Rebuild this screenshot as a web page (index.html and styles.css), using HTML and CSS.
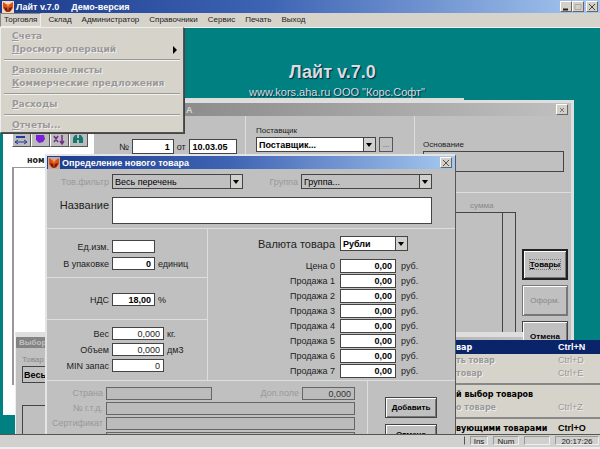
FILE: index.html
```html
<!DOCTYPE html>
<html lang="ru">
<head>
<meta charset="utf-8">
<title>Лайт v.7.0</title>
<link rel="stylesheet" href="styles.css">
</head>
<body>
<div class="app">
  <header class="titlebar app-title">
    <svg class="fox" viewBox="0 0 12 12" aria-hidden="true"><rect width="12" height="12" fill="#f3d9c4"/><path d="M1 1l3 2h4l3-2v6l-3 4H4L1 7z" fill="#d9501a"/><path d="M2 6l3 1 1 4-3-2zM10 6L7 7l-1 4 3-2z" fill="#6a1c10"/><path d="M4 3l2 3 2-3z" fill="#f59a3c"/></svg>
    <span class="app-name">Лайт v.7.0</span><span class="app-mode">Демо-версия</span>
    <span class="win-controls">
      <button class="ctl" type="button" aria-label="Свернуть"><svg viewBox="0 0 10 8"><path d="M2 6.5h5" stroke="#222" stroke-width="2"/></svg></button>
      <button class="ctl" type="button" aria-label="Развернуть"><svg viewBox="0 0 10 8"><path d="M2 1.5h6v5H2z" fill="none" stroke="#aaa"/></svg></button>
      <button class="ctl last" type="button" aria-label="Закрыть"><svg viewBox="0 0 10 8"><path d="M2 1l6 6M8 1L2 7" stroke="#444"/></svg></button>
    </span>
  </header>
  <nav class="menubar">
    <button type="button" class="open">Торговля</button><button type="button">Склад</button><button type="button">Администратор</button><button type="button">Справочники</button><button type="button">Сервис</button><button type="button">Печать</button><button type="button">Выход</button>
  </nav>

  <main class="desktop">
    <div class="brand"><h1>Лайт v.7.0</h1><p>www.kors.aha.ru ООО "Корс.Софт"</p></div>

    <section class="window journal">
      <div class="tools">
        <button type="button" aria-label="Период"><svg viewBox="0 0 16 12"><path d="M2 8h12M2 8l3-2M2 8l3 2M14 8l-3-2M14 8l-3 2" stroke="#223a9a" fill="none"/><path d="M3 3h9" stroke="#223a9a" stroke-width="2"/></svg></button>
        <button type="button" aria-label="Отбор"><svg viewBox="0 0 16 12"><path d="M4 1h8l1 4-2 3-4 1-3-3z" fill="#7a20d8"/></svg></button>
        <button type="button" aria-label="Сортировка"><svg viewBox="0 0 16 12"><path d="M3 2l4 6M7 2L3 8M11 1v8M9 7l2 3 2-3" stroke="#70308a" stroke-width="1.5" fill="none"/></svg></button>
        <button type="button" aria-label="Поиск"><svg viewBox="0 0 16 12"><path d="M3 9V4l2-3h2v3h2V1h2l2 3v5h-4V6H7v3z" fill="#127a70"/></svg></button>
      </div>
      <div class="journal-head">ном</div>
      <div class="journal-list"></div>
    </section>

    <section class="window order">
      <header class="titlebar inactive"><span>А</span><button class="ctl" type="button" aria-label="Закрыть"><svg viewBox="0 0 10 8"><path d="M3 2l4 4M7 2L3 6" stroke="#777"/></svg></button></header>
      <div class="order-head">
        <div class="order-num"><label for="num">№</label><input id="num" class="bold num" value="1"><label for="date">от</label><input id="date" class="bold" value="10.03.05"></div>
        <div class="order-sup"><label for="sup">Поставщик</label><div class="row"><span class="combo"><select id="sup"><option>Поставщик...</option></select></span><button class="dots" type="button">...</button></div></div>
        <div class="order-base"><label for="base">Основание</label><input id="base"></div>
      </div>
      <div class="order-body">
        <div class="order-table"><div class="sum">сумма</div><div class="grid-box"></div></div>
        <div class="order-actions">
          <button class="btn default" type="button"><span><u>Т</u>овары</span></button>
          <button class="btn" type="button" disabled>Оформ.</button>
          <button class="btn" type="button">Отмена</button>
        </div>
      </div>
    </section>

    <section class="window picker">
      <header class="titlebar inactive">Выбор</header>
      <div class="picker-body"><label for="pick">Товар</label><input id="pick" class="bold" value="Весь"><div class="picker-list"></div></div>
    </section>

    <div class="menu context" role="menu">
      <button type="button" class="hot"><span>вар</span><kbd>Ctrl+N</kbd></button>
      <button type="button" disabled><span>ть товар</span><kbd>Ctrl+D</kbd></button>
      <button type="button" disabled><span>товар</span><kbd>Ctrl+E</kbd></button>
      <hr>
      <button type="button"><span>й выбор товаров</span></button>
      <button type="button" disabled><span>о товаре</span><kbd>Ctrl+Z</kbd></button>
      <hr>
      <button type="button"><span>вующими товарами</span><kbd>Ctrl+O</kbd></button>
    </div>

    <section class="window product">
      <header class="titlebar">
        <svg class="fox" viewBox="0 0 12 12" aria-hidden="true"><rect width="12" height="12" fill="#c8a8a0"/><path d="M1 1l3 2h4l3-2v6l-3 4H4L1 7z" fill="#d9501a"/><path d="M2 6l3 1 1 4-3-2zM10 6L7 7l-1 4 3-2z" fill="#6a1c10"/><path d="M4 3l2 3 2-3z" fill="#f59a3c"/></svg>
        <span>Определение нового товара</span><button class="ctl" type="button" aria-label="Закрыть"><svg viewBox="0 0 10 8"><path d="M2 1l6 6M8 1L2 7" stroke="#555"/></svg></button>
      </header>
      <div class="top">
        <label class="dim" for="flt">Тов.фильтр</label><span class="combo flat"><select id="flt"><option>Весь перечень</option></select></span>
        <label class="dim" for="grp">Группа</label><span class="combo flat"><select id="grp"><option>Группа...</option></select></span>
        <label class="big" for="name">Название</label><textarea id="name"></textarea>
      </div>
      <div class="mid">
        <div class="left">
          <div class="block unit">
            <label for="u">Ед.изм.</label><input id="u" class="short"><span></span>
            <label for="pk">В упаковке</label><input id="pk" class="short bold num" value="0"><span>единиц</span>
          </div>
          <div class="block vat"><label for="v">НДС</label><input id="v" class="short bold num" value="18,00"><span>%</span></div>
          <div class="block size">
            <label for="w">Вес</label><input id="w" class="num" value="0,000"><span>кг.</span>
            <label for="vol">Объем</label><input id="vol" class="num" value="0,000"><span>дм3</span>
            <label for="min">MIN запас</label><input id="min" class="num" value="0"><span></span>
          </div>
        </div>
        <div class="right">
          <div class="currency"><label class="big" for="cur">Валюта товара</label><span class="combo"><select id="cur"><option>Рубли</option></select></span></div>
          <div class="prices">
            <label for="p0">Цена 0</label><input id="p0" class="bold num" value="0,00"><span>руб.</span>
            <label for="p1">Продажа 1</label><input id="p1" class="bold num" value="0,00"><span>руб.</span>
            <label for="p2">Продажа 2</label><input id="p2" class="bold num" value="0,00"><span>руб.</span>
            <label for="p3">Продажа 3</label><input id="p3" class="bold num" value="0,00"><span>руб.</span>
            <label for="p4">Продажа 4</label><input id="p4" class="bold num" value="0,00"><span>руб.</span>
            <label for="p5">Продажа 5</label><input id="p5" class="bold num" value="0,00"><span>руб.</span>
            <label for="p6">Продажа 6</label><input id="p6" class="bold num" value="0,00"><span>руб.</span>
            <label for="p7">Продажа 7</label><input id="p7" class="bold num" value="0,00"><span>руб.</span>
          </div>
        </div>
      </div>
      <div class="foot">
        <div class="extra">
          <label for="c">Страна</label><input id="c" class="gray"><label for="x">Доп.поле</label><input id="x" class="gray num" value="0,000">
          <label for="g">№ г.т.д.</label><input id="g" class="gray wide">
          <label for="s">Сертификат</label><input id="s" class="gray wide">
          <label for="o">Описание</label><input id="o" class="gray wide">
        </div>
        <div class="foot-actions">
          <button class="btn" type="button"><u>Д</u>обавить</button>
          <button class="btn" type="button">Отмена</button>
        </div>
      </div>
    </section>
  </main>

  <div class="menu dropdown" role="menu">
    <button type="button" disabled><span><u>С</u>чета</span></button>
    <button type="button" disabled><span><u>П</u>росмотр операций</span><svg class="arrow" viewBox="0 0 4 8"><path d="M0 0l4 4-4 4z" fill="#000"/></svg></button>
    <hr>
    <button type="button" disabled><span><u>Р</u>азвозные листы</span></button>
    <button type="button" disabled><span><u>К</u>оммерческие предложения</span></button>
    <hr>
    <button type="button" disabled><span><u>Р</u>асходы</span></button>
    <hr>
    <button type="button" disabled><span><u>О</u>тчеты...</span></button>
  </div>

  <footer class="status">
    <span class="msg"></span><span class="ins">Ins</span><span class="nm">Num</span><span class="nm"></span><span class="time">20:17:26</span>
  </footer>
</div>
</body>
</html>
```

FILE: styles.css
```css
* { box-sizing: border-box; }
body { margin: 0; font: 9px/12px "Liberation Sans", Arial, sans-serif; color: #222; }
button, input, select, textarea { font: inherit; color: inherit; margin: 0; padding: 0; border-radius: 0; }
label, span { white-space: nowrap; }
hr { margin: 3px 4px; border: 0; border-top: 1px solid #999; border-bottom: 1px solid #f2f2ee; }
u { text-underline-offset: 1px; }

.app { position: relative; height: 100vh; display: flex; flex-direction: column; overflow: hidden; background: #d6d3cb; }

.titlebar { display: flex; align-items: center; height: 13px; gap: 2px; color: #fff; font-weight: bold; font-size: 9px; background: linear-gradient(90deg, #1c3c8c, #3f64b4 45%, #a6c8f0); }
.titlebar.inactive { background: linear-gradient(90deg, #828282, #969696 35%, #c0c0c0); color: #d8d8d8; }
.app-title { flex: none; padding: 0 2px; }
.app-mode { margin-left: 10px; }
.fox { width: 12px; height: 12px; flex: none; }
.win-controls { display: flex; margin-left: auto; }
.ctl { display: flex; align-items: center; justify-content: center; width: 12px; height: 11px; margin-left: auto; border: 1px solid; border-color: #fff #666 #666 #fff; background: #d4d0c8; }
.ctl svg { width: 10px; height: 8px; flex: none; }
.ctl.last { margin-left: 2px; }

.menubar { flex: none; display: flex; height: 15px; font-size: 8px; border-bottom: 1px solid #eee; background: #d6d3cb; }
.menubar button { border: 1px solid transparent; background: none; padding: 0 4px; }
.menubar .open { padding: 0 3px; margin-right: 2px; border-color: #888 #eee #eee #888; }

.desktop { position: relative; flex: 1; min-height: 0; overflow: hidden; background: #008080; }
.brand { position: absolute; top: 34px; left: 249px; color: #d6dddd; text-shadow: 1px 1px 1px #024; white-space: nowrap; }
.brand h1 { margin: 0 0 0 40px; font-size: 18px; line-height: 20px; font-weight: bold; }
.brand p { margin: 4px 0 0; font-size: 11px; line-height: 12px; }

.window { position: absolute; background: #c0c0c0; }
.window .titlebar { padding: 0 3px; }

.journal { left: 3px; top: 70px; width: 461px; height: 317px; padding: 30px 9px 0; background: #fff; border-top: 5px solid #dcdcd8; }
.tools { display: flex; }
.tools button { width: 19px; height: 14px; border: 1px solid; border-color: #fff #555 #555 #fff; background: #bcbcbc; }
.tools svg { display: block; width: 16px; height: 12px; }
.journal-head { margin: 8px 0 0 15px; font: bold 8px/12px "DejaVu Sans", sans-serif; }
.journal-list { height: 218px; border: solid #999; border-width: 1px 0 0 2px; }

.order { left: 94px; top: 72px; width: 480px; height: 340px; border: solid #dedede; border-width: 3px 3px 0 0; }
.order > .titlebar { justify-content: space-between; padding-left: 92px; }
.order-head { display: flex; height: 77px; border-bottom: 1px solid #ddd; }
.order-num { display: flex; gap: 3px; width: 152px; padding: 23px 0 0 25px; border-right: 1px solid #ddd; align-items: flex-start; }
.order-num label { padding-top: 2px; }
.order-num input { width: 42px; height: 15px; }
.order-num #date { width: 48px; }
.order-sup { width: 169px; padding: 9px 0 0 10px; border-right: 1px solid #ddd; font-size: 8px; }
.order-sup label, .order-base label { display: block; font-size: 8px; }
.row { display: flex; gap: 3px; }
.row .combo { width: 120px; }
.dots { width: 14px; height: 15px; border: 1px solid #555; background: #c0c0c0; color: #555; }
.order-base { flex: 1; padding: 23px 7px 0 8px; }
.order-base input { width: 100%; height: 21px; background: #c0c0c0; }
.order-body { display: flex; height: 244px; }
.order-table { width: 422px; display: flex; flex-direction: column; align-items: flex-end; }
.sum { width: 46px; padding-top: 7px; font-size: 8px; color: #888; }
.grid-box { flex: 1; width: 100%; border: 1px solid #444; background: linear-gradient(90deg, #444 1px, transparent 1px) right 0 top 0 / 13px 100% no-repeat; }
.order-actions { display: flex; flex-direction: column; gap: 5px; padding: 56px 0 0 6px; }

.btn { width: 46px; height: 31px; border: 1px solid #444; box-shadow: inset 1px 1px #fff, inset -1px -1px #777; background: #c0c0c0; font-weight: bold; font-size: 8px; color: #000; }
.btn.default { border: 2px solid #222; }
.btn.default span { border: 1px dotted #777; }
.btn:disabled { color: #888; font-weight: normal; border-color: #777; }

.picker { left: 15px; top: 304px; width: 508px; height: 120px; border-top: 5px solid #dedede; border-left: 1px solid #eee; }
.picker .titlebar { height: 11px; font-size: 8px; color: #c0c0c0; }
.picker-body { padding: 6px; font-size: 8px; color: #888; display: flex; flex-direction: column; }
.picker-body input { width: 80px; height: 17px; color: #000; background: #c0c0c0; font-size: 9px; padding: 0 1px; }
.picker-list { margin-top: 22px; height: 60px; border: 1px solid #444; }

.menu { position: absolute; background: #d6d3cb; font: bold 9px/13px "DejaVu Sans", sans-serif; }
.menu button { display: flex; align-items: center; width: 100%; height: 13px; border: 0; background: none; color: #000; text-align: left; }
.menu button:disabled { color: #999; text-shadow: 1px 1px #eee; }
.menu kbd { margin-left: auto; width: 42px; font: bold 9px/13px "Liberation Sans", sans-serif; }
.menu button:disabled kbd { font-weight: normal; }
.dropdown { left: 0; top: 27px; width: 184px; padding: 2px 3px 0; border: 1px solid; border-color: #eee #555 #555 #eee; box-shadow: 1px 1px #444; font-size: 9px; }
.dropdown button { padding: 0 3px 0 8px; font-size: 9px; }
.dropdown hr { margin: 3px 0; }
.arrow { width: 4px; height: 8px; margin-left: auto; }
.context { left: 456px; right: 0; top: 312px; padding-bottom: 1px; font: bold 8px/13px "DejaVu Sans", sans-serif; }
.context hr { margin: 3px 0; border-color: #888; }
.context .hot { height: 14px; background: #0a246a; color: #fff; }

.product { left: 45px; top: 126px; width: 411px; bottom: 0; overflow: hidden; border: solid; border-width: 2px 1px 0 2px; border-color: #e4e4e4 #555 #555 #e4e4e4; }
.product > .titlebar { padding: 0 3px 0 1px; }
input, textarea, select { border: 1px solid #444; background: #fff; outline: 0; }
input { padding: 0 3px; min-width: 0; }
textarea { resize: none; }
.bold { font-weight: bold; color: #000; }
.num { text-align: right; }
.big { font-size: 11px; }
.dim { color: #999; }
.combo { position: relative; display: block; height: 15px; }
.combo select { appearance: none; display: block; width: 100%; height: 15px; padding: 0 2px; font-size: 9px; font-weight: bold; color: #000; }
.combo.flat select { background: #c0c0c0; font-weight: normal; }
.combo::before { content: ""; position: absolute; top: 1px; right: 1px; bottom: 1px; width: 11px; border-left: 1px solid #444; background: #d0d0cc; }
.combo::after { content: ""; position: absolute; top: 6px; right: 4px; border: 3px solid transparent; border-top: 4px solid #000; border-bottom: 0; }

.top { display: grid; grid-template-columns: 62px 131px 52px 131px; column-gap: 3px; row-gap: 8px; padding: 5px 0 4px; border-bottom: 1px solid #ddd; }
.top label { text-align: right; padding-top: 2px; }
.top textarea { grid-column: 2 / 5; height: 27px; }
.mid { display: flex; border-bottom: 1px solid #ddd; height: 152px; }
.left { width: 161px; border-right: 1px solid #ddd; }
.block { display: grid; grid-template-columns: 62px 52px 1fr; column-gap: 3px; row-gap: 3px; border-bottom: 1px solid #ddd; grid-auto-rows: 13px; align-items: center; }
.block:last-child { border-bottom: 0; }
.block label { text-align: right; }
.block input { height: 13px; width: 52px; }
.block .short { width: 43px; }
.unit { padding: 11px 0 7px; row-gap: 4px; }
.unit span, .vat span { margin-left: -9px; }
.vat { padding: 15px 0 13px; }
.size { padding: 7px 0; }
.right { flex: 1; padding-top: 7px; }
.currency { display: flex; gap: 5px; }
.currency label { width: 127px; text-align: right; padding-top: 2px; }
.currency .combo { width: 68px; }
.prices { display: grid; grid-template-columns: 127px 56px auto; column-gap: 5px; row-gap: 2px; grid-auto-rows: 13px; align-items: center; padding-top: 8px; }
.prices label { text-align: right; }
.prices input { height: 14px; }
.foot { display: flex; }
.extra { display: grid; grid-template-columns: 56px 106px 84px 53px; column-gap: 3px; row-gap: 2px; grid-auto-rows: 13px; width: 321px; padding-top: 6px; border-right: 1px solid #ddd; color: #999; }
.extra label { text-align: right; }
.extra input { height: 13px; color: #333; background: #bcbcbc; border-color: #666; }
.extra .wide { grid-column: 2 / 5; }
.foot-actions { display: flex; flex-direction: column; gap: 6px; padding: 16px 0 0 17px; }
.foot-actions .btn { width: 52px; height: 21px; }

.status { flex: none; display: flex; gap: 5px; height: 15px; padding: 1px 1px 2px 0; font-size: 8px; line-height: 10px; background: #d0d0ce; border-top: 1px solid #555; border-bottom: 2px solid #eee; }
.status span { border: 1px solid; border-color: #999 #eee #eee #999; text-align: center; }
.status .msg { flex: 1; border-color: transparent #555 transparent transparent; }
.status .ins { width: 18px; }
.status .nm { width: 26px; }
.status .time { width: 44px; }
```
